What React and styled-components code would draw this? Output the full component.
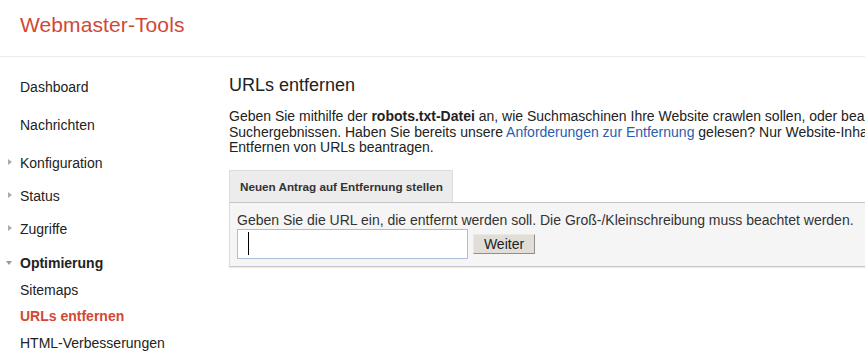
import React from 'react'
import styled, { createGlobalStyle } from 'styled-components'

const GlobalStyle = createGlobalStyle`
  html, body {
    margin: 0;
    padding: 0;
    background: #fff;
    overflow: hidden;
  }
  body {
    font-family: Arial, 'Liberation Sans', sans-serif;
    color: #222;
  }
`

const navItems = [
  { label: 'Dashboard', mt: 0 },
  { label: 'Nachrichten', mt: 18 },
  { label: 'Konfiguration', mt: 18, arrow: 'right' },
  { label: 'Status', mt: 13, arrow: 'right' },
  { label: 'Zugriffe', mt: 13, arrow: 'right' },
  { label: 'Optimierung', mt: 14, arrow: 'down', bold: true },
  { label: 'Sitemaps', mt: 7 },
  { label: 'URLs entfernen', mt: 6, active: true },
  { label: 'HTML-Verbesserungen', mt: 7 },
]

function App() {
  return (
    <Page>
      <GlobalStyle />
      <Header>
        <Title>Webmaster-Tools</Title>
      </Header>
      <Body>
        <Sidebar>
          {navItems.map((item) => (
            <NavItem
              key={item.label}
              $mt={item.mt}
              $bold={item.bold}
              $active={item.active}
            >
              {item.arrow && <Arrow $dir={item.arrow} />}
              {item.label}
            </NavItem>
          ))}
        </Sidebar>
        <Main>
          <Heading>URLs entfernen</Heading>
          <Intro>
            Geben Sie mithilfe der <strong>robots.txt-Datei</strong> an, wie
            Suchmaschinen Ihre Website crawlen sollen, oder beantragen Sie, dass
            Inhalte aus den Google-
            <br />
            Suchergebnissen. Haben Sie bereits unsere{' '}
            <a href='#'>Anforderungen zur Entfernung</a> gelesen? Nur
            Website-Inhaber und Nutzer mit uneingeschränkten Berechtigungen
            können das
            <br />
            Entfernen von URLs beantragen.
          </Intro>
          <Tab>Neuen Antrag auf Entfernung stellen</Tab>
          <Panel>
            <PanelText>
              Geben Sie die URL ein, die entfernt werden soll. Die
              Groß-/Kleinschreibung muss beachtet werden.
            </PanelText>
            <FormRow>
              <UrlBox>
                <Caret />
                <UrlInput type='text' aria-label='URL' />
              </UrlBox>
              <SubmitButton type='button'>Weiter</SubmitButton>
            </FormRow>
          </Panel>
        </Main>
      </Body>
    </Page>
  )
}

export default App

///// Style //////

const Page = styled.div`
  width: 865px;
  height: 361px;
  overflow: hidden;
`

const Header = styled.header`
  height: 57px;
  border-bottom: 1px solid #ebebeb;
  display: flex;
  align-items: center;
  padding-left: 20px;
  box-sizing: border-box;
`

const Title = styled.h1`
  margin: -6px 0 0;
  font-size: 21px;
  font-weight: normal;
  color: #d14836;
  letter-spacing: 0.1px;
`

const Body = styled.div`
  display: flex;
`

const Sidebar = styled.nav`
  width: 229px;
  flex-shrink: 0;
  display: flex;
  flex-direction: column;
  padding-top: 20px;
`

const NavItem = styled.div`
  position: relative;
  height: 20px;
  line-height: 20px;
  padding-left: 20px;
  margin-top: ${(p) => p.$mt}px;
  font-size: 14px;
  font-weight: ${(p) => (p.$bold || p.$active ? 'bold' : 'normal')};
  color: ${(p) => (p.$active ? '#d14836' : '#222')};
  white-space: nowrap;
`

const Arrow = styled.span`
  position: absolute;
  top: 50%;
  width: 0;
  height: 0;
  ${(p) =>
    p.$dir === 'down'
      ? `
    left: 6px;
    margin-top: -2px;
    border-left: 3.5px solid transparent;
    border-right: 3.5px solid transparent;
    border-top: 4px solid #999;
  `
      : `
    left: 8px;
    margin-top: -4px;
    border-top: 3.5px solid transparent;
    border-bottom: 3.5px solid transparent;
    border-left: 4px solid #aaa;
  `}
`

const Main = styled.main`
  flex: 1;
  min-width: 0;
  padding-top: 17px;
  display: flex;
  flex-direction: column;
  align-items: flex-start;
`

const Heading = styled.h2`
  margin: 0;
  font-size: 18px;
  font-weight: normal;
  line-height: 22px;
  color: #222;
`

const Intro = styled.p`
  margin: 13px 0 0;
  font-size: 14px;
  line-height: 15.5px;
  white-space: nowrap;
  color: #222;

  & a {
    color: #2a5db0;
    text-decoration: none;
  }
`

const Tab = styled.div`
  margin-top: 14px;
  height: 32px;
  box-sizing: border-box;
  padding: 0 9px 0 10px;
  display: flex;
  align-items: center;
  background: #ececec;
  border: 1px solid #dcdcdc;
  border-bottom: none;
  font-size: 11.7px;
  font-weight: bold;
  color: #333;
  white-space: nowrap;
`

const Panel = styled.section`
  width: 760px;
  box-sizing: border-box;
  height: 65px;
  background: #f5f5f5;
  border-top: 1px solid #c4c4c4;
  border-left: 1px solid #dcdcdc;
  border-bottom: 1px solid #c8c8c8;
  box-shadow: 0 1px 1px rgba(0, 0, 0, 0.08);
  padding: 8px 0 0 7px;
`

const PanelText = styled.div`
  font-size: 14px;
  line-height: 18px;
  color: #333;
  white-space: nowrap;
`

const FormRow = styled.div`
  display: flex;
  align-items: center;
  gap: 5px;
  margin-top: 0;
`

const UrlBox = styled.div`
  width: 231px;
  height: 30px;
  box-sizing: border-box;
  background: #fff;
  border: 1px solid #a9bedb;
  display: flex;
  align-items: center;
  padding-left: 10px;
`

const Caret = styled.span`
  width: 1px;
  height: 23px;
  background: #000;
  flex-shrink: 0;
`

const UrlInput = styled.input`
  flex: 1;
  min-width: 0;
  height: 100%;
  border: none;
  outline: none;
  background: transparent;
  padding: 0;
  font: inherit;
`

const SubmitButton = styled.button`
  width: 62px;
  height: 20px;
  padding: 0;
  background: #e1ded8;
  border: 1px solid #ece9e3;
  border-right-color: #8f8f8f;
  border-bottom-color: #8f8f8f;
  font-family: Arial, 'Liberation Sans', sans-serif;
  font-size: 14px;
  color: #222;
`
